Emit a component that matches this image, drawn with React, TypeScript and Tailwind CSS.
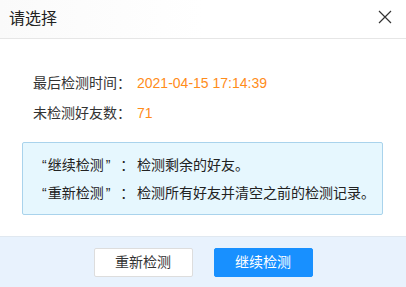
import React from "react";

const font = { fontFamily: '"Liberation Sans", "Noto Sans CJK SC", sans-serif' };

function Prefix({ text }: { text: string }) {
  return (
    <span className="inline-flex w-[95px] shrink-0">
      <span>“</span>
      <span className="ml-[1px]">{text}</span>
      <span className="ml-[2px]">”</span>
      <span className="ml-[10px]">：</span>
    </span>
  );
}

export default function App() {
  return (
    <div className="w-[406px] h-[287px] bg-white flex flex-col overflow-hidden" style={font}>
      {/* Header */}
      <div className="h-[39px] shrink-0 flex items-center justify-between border-b border-[#e6e6e6] bg-gradient-to-r from-[#fafafa] via-white to-white pl-[9px] pr-[14px]">
        <span className="text-[16px] text-[#222] leading-none">请选择</span>
        <svg width="14" height="14" viewBox="0 0 14 14" className="mb-[4px]">
          <path d="M1 1 L13 13 M13 1 L1 13" stroke="#333" strokeWidth="1.2" fill="none" />
        </svg>
      </div>

      {/* Body */}
      <div className="flex-1 flex flex-col pt-[34px]">
        <div className="flex flex-col gap-[10px] pl-[33px] text-[14px] leading-[20px]">
          <div className="flex">
            <span className="w-[104px] text-[#333]">最后检测时间：</span>
            <span className="text-[#ff8c1a]">2021-04-15 17:14:39</span>
          </div>
          <div className="flex">
            <span className="w-[104px] text-[#333]">未检测好友数：</span>
            <span className="text-[#ff8c1a]">71</span>
          </div>
        </div>

        <div className="mt-[19px] ml-[22px] mr-[23px] h-[73px] border border-[#a9d3ec] bg-[#e6f7fe] rounded-[2px] pl-[19px] pt-[12px] flex flex-col gap-[8px] text-[14px] leading-[20px] text-[#222]">
          <div className="flex">
            <Prefix text="继续检测" />
            <span>检测剩余的好友。</span>
          </div>
          <div className="flex">
            <Prefix text="重新检测" />
            <span>检测所有好友并清空之前的检测记录。</span>
          </div>
        </div>
      </div>

      {/* Footer */}
      <div className="h-[51px] shrink-0 bg-[#e8f2fd] border-t border-[#e0e8f0] flex items-center justify-center gap-[21px] pt-[1px]">
        <button className="w-[99px] h-[29px] bg-white border border-[#dddddd] rounded-[2px] text-[14px] text-[#333]">
          重新检测
        </button>
        <button className="w-[99px] h-[29px] bg-[#1890ff] border border-[#1890ff] rounded-[2px] text-[14px] text-white">
          继续检测
        </button>
      </div>
    </div>
  );
}
